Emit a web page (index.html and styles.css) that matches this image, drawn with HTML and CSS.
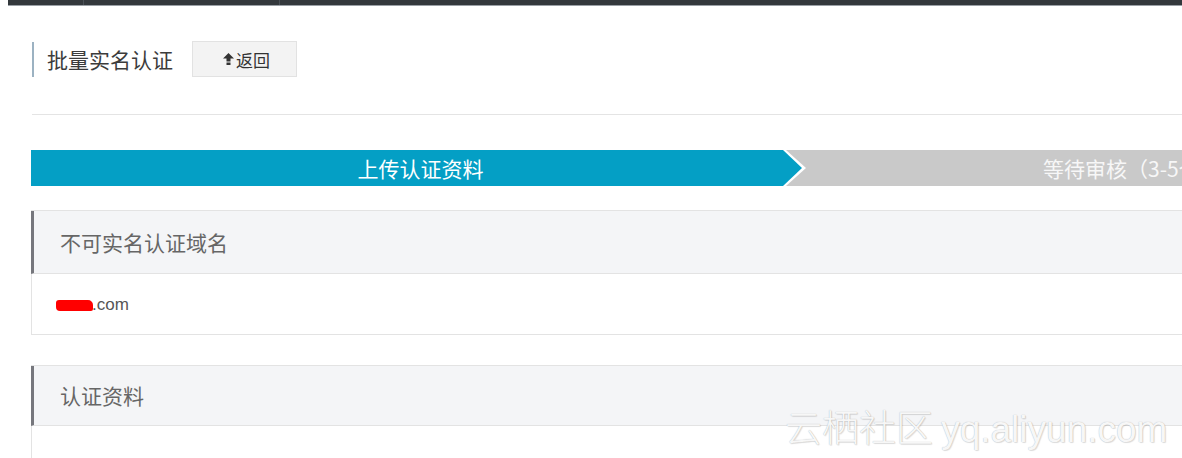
FILE: index.html
```html
<!DOCTYPE html>
<html lang="zh">
<head>
<meta charset="utf-8">
<title>批量实名认证</title>
<link rel="stylesheet" href="styles.css">
</head>
<body>
<div class="topbar">
  <div class="tb-seg tb-a"></div>
  <div class="tb-seg tb-b"></div>
  <div class="tb-seg tb-c"></div>
</div>
<main class="page">
  <div class="head">
    <h1 class="title">批量实名认证</h1>
    <button class="back-btn">
      <svg class="back-ico" width="11" height="12" viewBox="0 0 11 12"><polygon points="5.5,0 11,5.5 7.5,5.5 7.5,8.5 3.5,8.5 3.5,5.5 0,5.5" fill="#333"/><rect x="3.5" y="9.5" width="4" height="2.5" fill="#333"/></svg>返回
    </button>
  </div>
  <hr class="divider">
  <div class="steps">
    <div class="step step-active"><div class="step-inner">上传认证资料</div></div>
    <div class="step step-next">等待审核（3-5个工作日）</div>
  </div>
  <section class="panel">
    <div class="panel-head">不可实名认证域名</div>
    <div class="panel-body"><span class="redact"></span>.com</div>
  </section>
  <section class="panel panel-2">
    <div class="panel-head">认证资料</div>
    <div class="panel-body panel-body-tall"></div>
  </section>
</main>
<div class="watermark">云栖社区 <span class="wm-latin">yq.aliyun.com</span></div>
</body>
</html>
```
FILE: styles.css
```css
html, body {
  margin: 0;
  padding: 0;
  background: #fff;
  overflow: hidden;
  width: 1182px;
  height: 458px;
  font-family: "Noto Sans CJK SC", "Liberation Sans", sans-serif;
}
.topbar {
  display: flex;
  margin-left: 8px;
  height: 5px;
  background: #33383c;
  border-bottom: 1px solid #9aa0a6;
}
.tb-seg { height: 5px; border-right: 1px solid #4a5056; }
.tb-a { width: 75px; }
.tb-b { width: 195px; }
.tb-c { flex: 1; border-right: none; }
.page {
  padding-left: 31px;
  width: 2400px;
}
.head {
  display: flex;
  align-items: center;
  margin-top: 35px;
  height: 36px;
}
.title {
  margin: 0;
  font-weight: normal;
  font-size: 21px;
  line-height: 35px;
  color: #3c3c3c;
  border-left: 2px solid #9cb2c2;
  padding-left: 13px;
  margin-left: 1px;
  margin-top: 1px;
}
.back-btn {
  margin-left: 19px;
  width: 105px;
  height: 36px;
  background: #f3f3f3;
  border: 1px solid #e2e2e2;
  border-radius: 0;
  font-family: "Noto Sans CJK SC", sans-serif;
  font-size: 17px;
  color: #333;
  display: flex;
  align-items: center;
  justify-content: center;
  padding: 0 0 0 4px;
}
.back-ico { margin-right: 2px; }
.divider {
  margin: 37px 0 0 1px;
  border: none;
  border-top: 1px solid #e4e4e4;
  height: 0;
}
.steps {
  display: flex;
  margin-top: 35px;
  height: 36px;
  background: #c9c9c9;
}
.step {
  height: 36px;
  line-height: 37px;
  font-size: 21px;
  color: #fff;
}
.step-active {
  width: 775px;
  flex: none;
  background: #fff;
  clip-path: polygon(0 0, 755px 0, 775px 18px, 755px 36px, 0 36px);
}
.step-inner {
  width: 771px;
  height: 36px;
  background: #049fc5;
  clip-path: polygon(0 0, 752px 0, 771px 18px, 752px 36px, 0 36px);
  text-align: center;
  padding-left: 8px;
  box-sizing: border-box;
}
.step-next {
  padding-left: 237px;
  white-space: nowrap;
  color: #f7f7f7;
}
.panel {
  margin-top: 24px;
  border: 1px solid #e3e3e3;
  border-left: none;
}
.panel-head {
  height: 62px;
  line-height: 62px;
  background: #f4f5f7;
  border-left: 3px solid #76777d;
  padding-left: 26px;
  font-size: 21px;
  color: #666;
  border-bottom: 1px solid #e3e3e3;
}
.panel-body {
  height: 60px;
  line-height: 62px;
  border-left: 1px solid #e3e3e3;
  padding-left: 24px;
  font-family: "Liberation Sans", sans-serif;
  font-size: 17px;
  color: #555;
}
.redact {
  display: inline-block;
  width: 37px;
  height: 11px;
  background: #f00;
  border-radius: 3px 5px 2px 4px;
  vertical-align: -1px;
  margin-right: -1px;
}
.panel-2 { margin-top: 30px; }
.panel-2 .panel-head { height: 59px; line-height: 59px; }
.panel-body-tall { height: 80px; }
.watermark {
  position: absolute;
  left: 785px;
  top: 401px;
  font-family: "Noto Sans CJK SC", sans-serif;
  font-size: 37px;
  line-height: 50px;
  color: rgba(255, 255, 255, 0.92);
  text-shadow: 0 0 1px #a9a9a9, 1px 1px 1px rgba(0, 0, 0, 0.12);
  white-space: nowrap;
  font-weight: 300;
}
.wm-latin {
  font-family: "Liberation Sans", sans-serif;
  font-weight: normal;
}
```
